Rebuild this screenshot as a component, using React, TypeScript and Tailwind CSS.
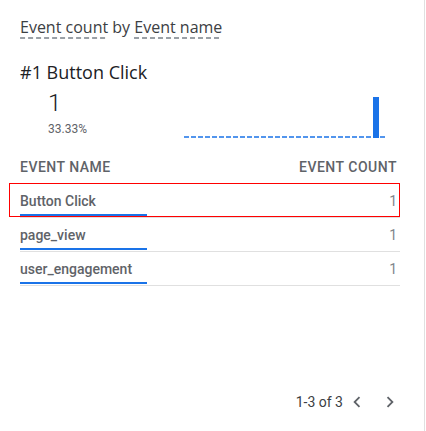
import React from "react";

const rows = [
  { name: "Button Click", count: 1, share: 33.33 },
  { name: "page_view", count: 1, share: 33.33 },
  { name: "user_engagement", count: 1, share: 33.33 },
];

function Dashed({ children }: { children: React.ReactNode }) {
  return (
    <span className="bg-[linear-gradient(to_right,#9aa0a6_62%,transparent_62%)] bg-[length:8px_2px] bg-bottom bg-repeat-x pb-[1px]">
      {children}
    </span>
  );
}

function Chevron({ dir }: { dir: "left" | "right" }) {
  return (
    <svg width="22" height="22" viewBox="0 0 24 24" fill="#5f6368">
      {dir === "left" ? (
        <path d="M15.41 7.41L14 6l-6 6 6 6 1.41-1.41L10.83 12z" />
      ) : (
        <path d="M10 6L8.59 7.41 13.17 12l-4.58 4.59L10 18l6-6z" />
      )}
    </svg>
  );
}

export default function App() {
  return (
    <div className="relative w-[425px] h-[431px] border-r border-[#e0e0e0] bg-white pl-5 pr-6 font-['Roboto',sans-serif]">
      {/* Title */}
      <div className="pt-[15px] text-[16px] leading-6 text-[#3c4043] font-['Open_Sans',sans-serif]">
        <Dashed>Event count</Dashed> by <Dashed>Event name</Dashed>
      </div>

      {/* Top item */}
      <div className="mt-[21px] text-[18px] leading-6 text-[#202124] font-['Open_Sans',sans-serif]">
        #1 Button Click
      </div>
      <div className="flex items-end">
        <div className="pl-[28px] pt-[5px] flex flex-col gap-1">
          <span className="text-[24px] leading-[28px] text-[#202124] font-light">1</span>
          <span className="text-[12px] leading-4 text-[#5f6368]">33.33%</span>
        </div>
        <svg className="ml-auto mr-[12px] mb-[-1px]" width="205" height="41" viewBox="0 0 205 41">
          <line x1="1" y1="40" x2="203" y2="40" stroke="#1a73e8" strokeWidth="1.5" strokeDasharray="5 2" />
          <rect x="190" y="0" width="6" height="41" fill="#1a73e8" />
        </svg>
      </div>

      {/* Table */}
      <div className="mt-[15px]">
        <div className="flex h-8 items-center justify-between border-b border-[#e0e0e0] pr-[3px] text-[14px] font-medium uppercase tracking-[0.5px] text-[#5f6368]">
          <span>Event name</span>
          <span>Event count</span>
        </div>
        {rows.map((r) => (
          <div key={r.name} className="flex flex-col border-b border-[#e0e0e0] pt-2 pb-px">
            <div className="flex h-[18px] items-center justify-between pr-[3px] text-[14px]">
              <span className="font-medium text-[#5f6368]">{r.name}</span>
              <span className="text-[#80868b]">{r.count}</span>
            </div>
            <div className="mt-1 h-[2px] bg-[#1a73e8]" style={{ width: `${r.share}%` }} />
          </div>
        ))}
      </div>

      {/* Pagination */}
      <div className="mt-[104px] -mr-[2px] flex h-6 items-center justify-end text-[14px] text-[#3c4043]">
        <span className="mr-[2px]">1-3 of 3</span>
        <button className="flex h-6 w-6 items-center justify-center">
          <Chevron dir="left" />
        </button>
        <button className="ml-[9px] flex h-6 w-6 items-center justify-center">
          <Chevron dir="right" />
        </button>
      </div>

      {/* Highlight outline */}
      <div className="absolute left-[9px] top-[183px] h-[34px] w-[391px] border-[1.5px] border-[#ff0000]" />
    </div>
  );
}
